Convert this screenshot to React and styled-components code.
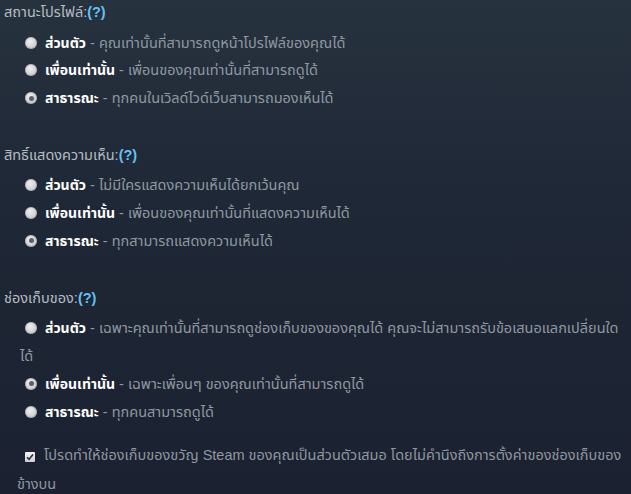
import React from 'react';
import styled, { createGlobalStyle } from 'styled-components';

const GlobalStyle = createGlobalStyle`
  html, body {
    margin: 0;
    padding: 0;
    background: #1b2231;
  }
  body {
    font-family: "Liberation Sans", Tahoma, "Noto Sans Thai", "Noto Sans", sans-serif;
  }
`;

const sections = [
  {
    title: 'สถานะโปรไฟล์:',
    selected: 2,
    options: [
      { label: 'ส่วนตัว', text: 'คุณเท่านั้นที่สามารถดูหน้าโปรไฟล์ของคุณได้' },
      { label: 'เพื่อนเท่านั้น', text: 'เพื่อนของคุณเท่านั้นที่สามารถดูได้' },
      { label: 'สาธารณะ', text: 'ทุกคนในเวิลด์ไวด์เว็บสามารถมองเห็นได้' },
    ],
  },
  {
    title: 'สิทธิ์แสดงความเห็น:',
    selected: 2,
    options: [
      { label: 'ส่วนตัว', text: 'ไม่มีใครแสดงความเห็นได้ยกเว้นคุณ' },
      { label: 'เพื่อนเท่านั้น', text: 'เพื่อนของคุณเท่านั้นที่แสดงความเห็นได้' },
      { label: 'สาธารณะ', text: 'ทุกสามารถแสดงความเห็นได้' },
    ],
  },
  {
    title: 'ช่องเก็บของ:',
    selected: 1,
    options: [
      {
        label: 'ส่วนตัว',
        text: 'เฉพาะคุณเท่านั้นที่สามารถดูช่องเก็บของของคุณได้ คุณจะไม่สามารถรับข้อเสนอแลกเปลี่ยนใด\u200Bได้',
      },
      { label: 'เพื่อนเท่านั้น', text: 'เฉพาะเพื่อนๆ ของคุณเท่านั้นที่สามารถดูได้' },
      { label: 'สาธารณะ', text: 'ทุกคนสามารถดูได้' },
    ],
  },
];

const App = () => {
  return (
    <>
      <GlobalStyle />
      <Page>
        {sections.map((section) => (
          <Section key={section.title}>
            <Heading>
              {section.title}
              <Help>(?)</Help>
            </Heading>
            <Options>
              {section.options.map((option, i) => (
                <Option key={option.label}>
                  <Radio checked={i === section.selected} />
                  <Label>{option.label}</Label>
                  <Description> - {option.text}</Description>
                </Option>
              ))}
            </Options>
          </Section>
        ))}
        <CheckRow>
          <Checkbox>
            <svg width="8" height="8" viewBox="0 0 8 8">
              <path d="M1 4.2 L3 6.2 L7 1.4" fill="none" stroke="#2a2f36" strokeWidth="1.6" />
            </svg>
          </Checkbox>
          <Description>
            โปรดทำให้ช่องเก็บของขวัญ Steam ของคุณเป็นส่วนตัวเสมอ โดยไม่คำนึงถึงการตั้งค่าของช่องเก็บของ{'\u200B'}ข้างบน
          </Description>
        </CheckRow>
      </Page>
    </>
  );
};

const Page = styled.div`
  width: 631px;
  height: 494px;
  overflow: hidden;
  box-sizing: border-box;
  padding: 0 6px 0 4px;
  background: linear-gradient(180deg, #27323f 0%, #1f2836 40%, #1b2130 100%);
  font-size: 14.5px;
`;

const Section = styled.div`
  margin-bottom: 30px;
`;

const Heading = styled.div`
  line-height: 24px;
  color: #b6bcc2;
`;

const Help = styled.span`
  color: #66c0f4;
  font-weight: bold;
`;

const Options = styled.div`
  margin-top: 5.5px;
  padding-left: 16px;
`;

const Option = styled.div`
  line-height: 27.8px;
`;

const Radio = styled.span`
  display: inline-block;
  position: relative;
  width: 12px;
  height: 12px;
  margin: 0 8px 0 5px;
  vertical-align: -1px;
  border-radius: 50%;
  background: radial-gradient(circle at 40% 35%, #eeeeee 0%, #d2d2d2 60%, #b4b4b4 100%);
  box-shadow: inset 0 0 0 1px rgba(120, 120, 120, 0.35);

  &::after {
    content: '';
    display: ${(p) => (p.checked ? 'block' : 'none')};
    position: absolute;
    left: 3.5px;
    top: 3.5px;
    width: 5px;
    height: 5px;
    border-radius: 50%;
    background: #5b5f66;
  }
`;

const Label = styled.span`
  color: #ffffff;
  font-weight: bold;
  font-size: 14px;
  vertical-align: top;
`;

const Description = styled.span`
  color: #8f98a0;
  vertical-align: top;
`;

const CheckRow = styled.div`
  margin-top: -15px;
  padding-left: 13px;
  line-height: 29px;
`;

const Checkbox = styled.span`
  display: inline-flex;
  align-items: center;
  justify-content: center;
  width: 10px;
  height: 10px;
  margin: 0 9px 0 8px;
  vertical-align: -1px;
  background: linear-gradient(180deg, #f4f4f4, #cfcfcf);
  border-radius: 1px;
`;

export default App;
